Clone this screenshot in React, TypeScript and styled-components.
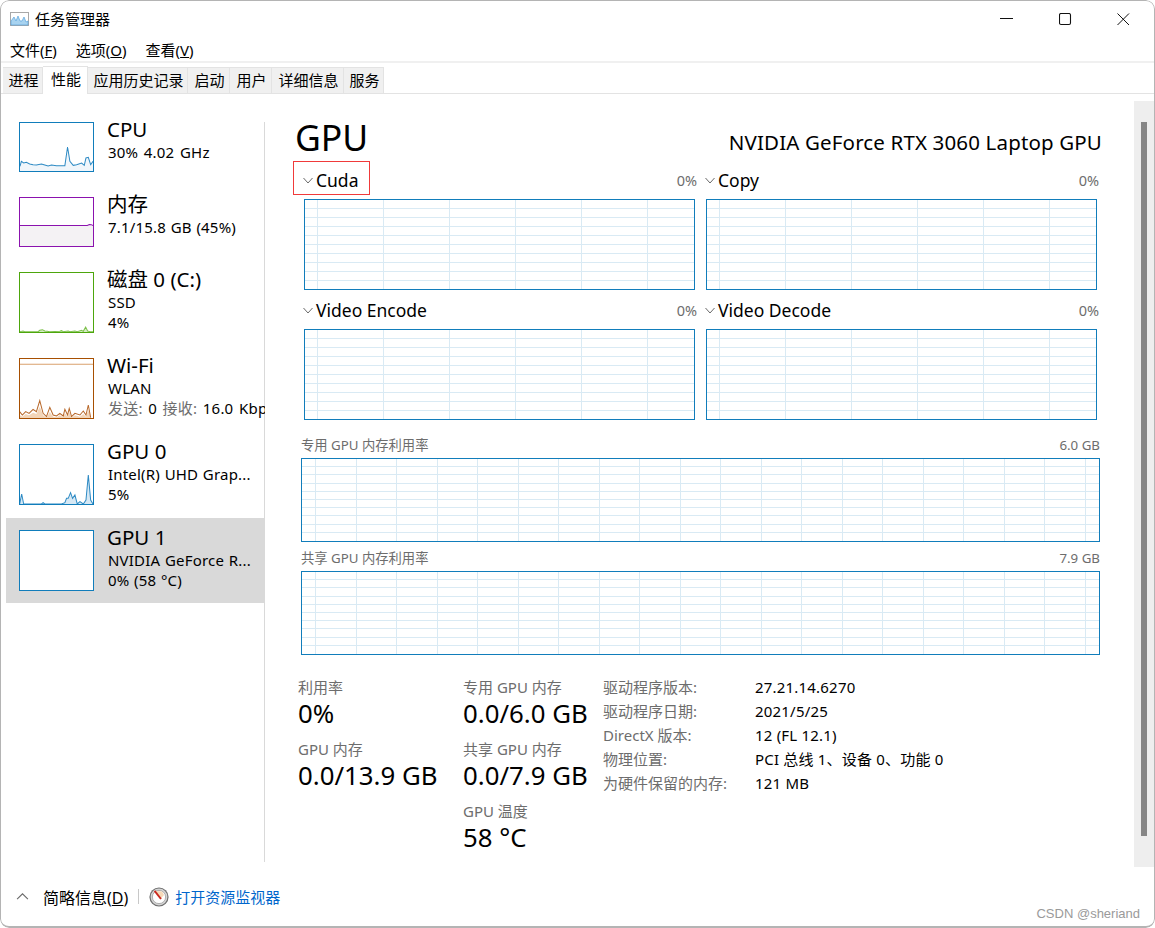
import React from "react";
import styled, { createGlobalStyle } from "styled-components";

const Global = createGlobalStyle`
  html, body { margin: 0; padding: 0; background: #fff; }
  * { box-sizing: border-box; }
  body { font-family: "Noto Sans", "Noto Sans CJK SC", sans-serif; color: #000; }
`;

const Window = styled.div`
  position: relative;
  width: 1155px;
  height: 928px;
  background: #fff;
  border-radius: 9px;
  overflow: hidden;
  display: flex;
  flex-direction: column;
  &::after {
    content: "";
    position: absolute;
    inset: 0;
    border: 1px solid #b4b4b4;
    border-bottom-width: 2px;
    border-radius: 9px;
    pointer-events: none;
  }
`;

const TitleBar = styled.div`
  height: 37px;
  flex: none;
  display: flex;
  align-items: center;
  padding-left: 10px;
  font-size: 15px;
`;
const TitleText = styled.span`
  margin-left: 6px;
  flex: 1;
`;
const WinControls = styled.div`
  display: flex;
  margin-right: 2px;
  height: 37px;
`;
const WinButton = styled.div`
  width: 58.5px;
  padding-top: 2px;
  display: flex;
  align-items: center;
  justify-content: center;
`;

const MenuBar = styled.div`
  height: 24px;
  flex: none;
  display: flex;
  align-items: center;
  padding: 1px 0 0 10px;
  gap: 19px;
  font-size: 15px;
  line-height: 24px;
  & u { text-underline-offset: 1px; }
`;
const Band = styled.div`
  height: 2px;
  flex: none;
  background: #f0f0f0;
`;
const TabRow = styled.div`
  height: 31px;
  flex: none;
  display: flex;
  align-items: flex-end;
  padding-left: 3px;
  border-bottom: 1px solid #e3e3e3;
`;
const Tab = styled.div<{ $w: number; $active?: boolean }>`
  width: ${(p) => p.$w}px;
  height: ${(p) => (p.$active ? 28 : 26)}px;
  margin-bottom: ${(p) => (p.$active ? -1 : 0)}px;
  padding-left: 2px;
  background: ${(p) => (p.$active ? "#fff" : "#f0f0f0")};
  border: 1px solid #e3e3e3;
  border-bottom: 0;
  border-left-width: 0;
  font-size: 15px;
  line-height: 25px;
  text-align: center;
  white-space: nowrap;
  position: relative;
`;

const Body = styled.div`
  flex: 1;
  min-height: 0;
  display: flex;
`;

const Sidebar = styled.div`
  position: relative;
  width: 265px;
  flex: none;
  padding: 16px 0 0 6px;
  &::after {
    content: "";
    position: absolute;
    top: 28px;
    right: 0;
    width: 1px;
    height: 740px;
    background: #d9d9d9;
  }
`;
const Item = styled.div<{ $selected?: boolean }>`
  position: relative;
  z-index: 1;
  display: flex;
  align-items: flex-start;
  padding: 12px 0 12px 13px;
  margin-bottom: 1px;
  background: ${(p) => (p.$selected ? "#d9d9d9" : "transparent")};
  overflow: hidden;
`;
const Thumb = styled.div<{ $color: string; $h: number }>`
  width: 75px;
  height: ${(p) => p.$h}px;
  flex: none;
  border: 1px solid ${(p) => p.$color};
  background: #fff;
  & svg { display: block; width: 73px; height: ${(p) => p.$h - 2}px; }
`;
const ItemText = styled.div`
  margin: -5px 0 0 13px;
  white-space: nowrap;
`;
const ItemTitle = styled.div`
  font-size: 20.5px;
  line-height: 24px;
  margin-bottom: 1px;
`;
const ItemSub = styled.div<{ $wide?: boolean }>`
  font-size: 15px;
  letter-spacing: 0.2px;
  word-spacing: ${(p) => (p.$wide ? 1.5 : 0.5)}px;
  line-height: 20px;
  margin-left: 1px;
`;
const Muted = styled.span`
  color: #6d6d6d;
`;

const Main = styled.div`
  flex: 1;
  min-width: 0;
  padding: 20px 32px 0 31px;
`;
const Header = styled.div`
  display: flex;
  justify-content: space-between;
  align-items: flex-end;
  height: 46px;
  margin-bottom: 3px;
`;
const Heading = styled.div`
  font-size: 35.5px;
  line-height: 46px;
  margin-left: -1px;
`;
const GpuName = styled.div`
  font-size: 20.5px;
  letter-spacing: 0.15px;
  line-height: 26px;
  margin-bottom: 5px;
`;
const EngineGrid = styled.div`
  display: grid;
  grid-template-columns: 396px 396px;
  column-gap: 6px;
  row-gap: 3px;
  margin-left: 6px;
`;
const Engine = styled.div`
  position: relative;
`;
const EngineHead = styled.div`
  height: 36px;
  padding-bottom: 2px;
  display: flex;
  align-items: center;
  & svg { flex: none; }
`;
const EngineName = styled.span`
  font-size: 17.5px;
  margin-left: 2px;
  flex: 1;
`;
const Percent = styled.span`
  font-size: 14.5px;
  color: #6d6d6d;
  margin-right: 1px;
`;
const RedMark = styled.div`
  position: absolute;
  left: -9px;
  top: -2px;
  width: 77px;
  height: 34px;
  border: 1px solid #f03a3a;
`;
const EngineChart = styled.div`
  width: 391px;
  height: 91px;
  margin-left: 2px;
  border: 1px solid #117dbb;
  & svg { display: block; }
`;
const WideBlock = styled.div<{ $top: number }>`
  margin: ${(p) => p.$top}px 2px 0 5px;
`;
const WideHead = styled.div`
  height: 20px;
  margin-bottom: 3px;
  padding-bottom: 1px;
  display: flex;
  justify-content: space-between;
  align-items: center;
  font-size: 13.3px;
  color: #6d6d6d;
`;
const WideChart = styled.div`
  height: 84px;
  border: 1px solid #117dbb;
  & svg { display: block; }
`;

const Stats = styled.div`
  display: flex;
  margin-top: 20px;
  padding-left: 2px;
`;
const StatCol = styled.div<{ $w: number }>`
  width: ${(p) => p.$w}px;
  flex: none;
  padding-top: 2px;
`;
const Stat = styled.div`
  margin-bottom: 10px;
`;
const StatLabel = styled.div`
  font-size: 15px;
  line-height: 20px;
  color: #6d6d6d;
`;
const StatValue = styled.div`
  font-size: 25.8px;
  line-height: 32px;
  white-space: nowrap;
`;
const InfoTable = styled.div`
  display: grid;
  grid-template-columns: 152px auto;
  grid-auto-rows: 24px;
  font-size: 15px;
  line-height: 24px;
`;
const InfoLabel = styled.div`
  color: #6d6d6d;
`;
const InfoValue = styled.div`
  color: #000;
  letter-spacing: 0.2px;
`;

const Track = styled.div`
  width: 20px;
  flex: none;
  margin: 7px 1px 0 0;
  padding: 21px 7px 31px;
  background: #eeeeee;
`;
const ScrollThumb = styled.div`
  width: 6px;
  height: 100%;
  background: #868686;
`;

const Footer = styled.div`
  height: 61px;
  flex: none;
  display: flex;
  align-items: center;
  padding: 0 0 2px 16px;
  font-size: 15px;
  & u { text-underline-offset: 1px; }
`;
const FooterLabel = styled.span`
  margin-left: 14px;
  font-size: 16px;
`;
const Separator = styled.div`
  width: 1px;
  height: 15px;
  background: #c8c8c8;
  margin: 0 10px;
`;
const MonitorLink = styled.a`
  margin-left: 6px;
  color: #0066cc;
`;
const Watermark = styled.div`
  position: absolute;
  right: 15px;
  bottom: 7px;
  font-family: "Liberation Sans", sans-serif;
  font-size: 13px;
  color: #9a9a9a;
`;

const Chevron = ({ up, size = 12 }: { up?: boolean; size?: number }) => (
  <svg width={size} height={size} viewBox="0 0 12 12" fill="none" stroke="#6a6a6a" strokeWidth="1">
    <path d={up ? "M1 8.5 L6 3.5 L11 8.5" : "M1.5 4 L6 9 L10.5 4"} />
  </svg>
);

const Grid = ({ w, h, vStart, vStep, hStep }: { w: number; h: number; vStart: number; vStep: number; hStep: number }) => {
  const xs: number[] = [];
  for (let x = vStart; x < w; x += vStep) xs.push(Math.round(x) + 0.5);
  const ys: number[] = [];
  for (let y = hStep; y < h; y += hStep) ys.push(Math.round(y) - 0.5);
  return (
    <svg width={w} height={h} shapeRendering="crispEdges">
      {ys.map((y) => (
        <line key={`h${y}`} x1={0} x2={w} y1={y} y2={y} stroke="#d9eaf4" />
      ))}
      {xs.map((x) => (
        <line key={`v${x}`} x1={x} x2={x} y1={0} y2={h} stroke="#d9eaf4" />
      ))}
    </svg>
  );
};

const Spark = ({ box, color, fill, pts, base }: { box: string; color: string; fill: string; pts: string; base: number }) => {
  const first = pts.trim().split(" ")[0].split(",")[0];
  const last = pts.trim().split(" ").slice(-1)[0].split(",")[0];
  return (
    <svg viewBox={box} preserveAspectRatio="none">
      <polygon points={`${first},${base} ${pts} ${last},${base}`} fill={fill} />
      <polyline points={pts} fill="none" stroke={color} strokeWidth="3" />
    </svg>
  );
};

const AppIcon = () => (
  <svg width="19" height="14" viewBox="0 0 19 14" style={{ flex: "none" }}>
    <rect x="0.5" y="0.5" width="18" height="13" fill="#fff" stroke="#a8a8a8" />
    <path d="M1 13 V9 L4 5 L6 9 L8 4 L10 9 L12 9 L14 5 L16 10 L18 9 V13 Z" fill="#a8d3f0" stroke="#5aa5dc" strokeWidth="0.7" />
  </svg>
);

const MonitorIcon = () => (
  <svg width="20" height="20" viewBox="0 0 20 20" style={{ flex: "none" }}>
    <circle cx="10" cy="10" r="9.6" fill="#6f6f6f" />
    <circle cx="10" cy="10" r="8.4" fill="#d4d4d4" />
    <circle cx="10" cy="10" r="6.6" fill="#fff" stroke="#8a8a8a" strokeWidth="0.6" />
    <path d="M7 4 L13 4.6 L15 8 L11.5 12 Z" fill="#f6d9b8" />
    <path d="M5.6 3.8 L12 12" stroke="#c9281f" strokeWidth="1.9" />
  </svg>
);

const engines = [
  { name: "Cuda", mark: true },
  { name: "Copy" },
  { name: "Video Encode" },
  { name: "Video Decode" },
];

export default function App() {
  return (
    <Window>
      <Global />
      <TitleBar>
        <AppIcon />
        <TitleText>任务管理器</TitleText>
        <WinControls>
          <WinButton>
            <svg width="13" height="13" viewBox="0 0 13 13"><path d="M0 5.5 H13" stroke="#111" strokeWidth="1" /></svg>
          </WinButton>
          <WinButton>
            <svg width="13" height="13" viewBox="0 0 13 13"><rect x="0.5" y="0.5" width="11" height="11" rx="1.5" fill="none" stroke="#111" strokeWidth="1.1" /></svg>
          </WinButton>
          <WinButton>
            <svg width="13" height="13" viewBox="0 0 13 13"><path d="M0.5 0.5 L12 12 M12 0.5 L0.5 12" stroke="#111" strokeWidth="1" /></svg>
          </WinButton>
        </WinControls>
      </TitleBar>
      <MenuBar>
        <span>文件(<u>F</u>)</span>
        <span>选项(<u>O</u>)</span>
        <span>查看(<u>V</u>)</span>
      </MenuBar>
      <Band />
      <TabRow>
        <Tab $w={40}>进程</Tab>
        <Tab $w={45} $active>性能</Tab>
        <Tab $w={100}>应用历史记录</Tab>
        <Tab $w={42}>启动</Tab>
        <Tab $w={42}>用户</Tab>
        <Tab $w={72}>详细信息</Tab>
        <Tab $w={40}>服务</Tab>
      </TabRow>
      <Body>
        <Sidebar>
          <Item>
            <Thumb $color="#117dbb" $h={50}>
              <Spark box="61 40 218 144" color="#2d8ac4" fill="#f0f6fb" base={184}
                pts="61,170 65,155 72,160 80,158 90,163 100,165 110,166 125,163 135,166 145,169 155,166 170,168 185,168 195,168 203,112 210,155 220,167 230,165 245,160 253,167 258,145 265,143 272,165 279,155" />
            </Thumb>
            <ItemText>
              <ItemTitle>CPU</ItemTitle>
              <ItemSub $wide>30% 4.02 GHz</ItemSub>
            </ItemText>
          </Item>
          <Item>
            <Thumb $color="#8b12ae" $h={50}>
              <Spark box="61 264 218 144" color="#8b12ae" fill="#f4f2f4" base={408}
                pts="61,346.5 262,346.5 268,343.5 274,344 279,346.5" />
            </Thumb>
            <ItemText>
              <ItemTitle>内存</ItemTitle>
              <ItemSub>7.1/15.8 GB (45%)</ItemSub>
            </ItemText>
          </Item>
          <Item>
            <Thumb $color="#4da60c" $h={61}>
              <Spark box="61 490 218 177" color="#7dc04c" fill="#d6ecc6" base={667}
                pts="61,666 70,664 75,666 115,666 120,662 128,660 135,664 142,665 150,666 180,665 185,663 190,666 205,664 210,666 225,664 232,666 245,662 250,665 257,652 263,664 270,666 279,666" />
            </Thumb>
            <ItemText>
              <ItemTitle>磁盘 0 (C:)</ItemTitle>
              <ItemSub>SSD</ItemSub>
              <ItemSub>4%</ItemSub>
            </ItemText>
          </Item>
          <Item>
            <Thumb $color="#a74f01" $h={61}>
              <svg viewBox="61 27 218 177" preserveAspectRatio="none">
                <path d="M61 43 H279" stroke="#d9a06c" strokeWidth="3" fill="none" />
                <polygon points="61,204 60,195 68,200 78,192 88,196 100,188 110,192 120,170 130,196 140,203 150,186 160,200 170,202 180,196 190,202 195,190 203,200 208,186 215,203 225,196 240,200 250,192 258,200 265,180 272,204" fill="#f3d5b8" />
                <polyline points="60,185 68,195 78,185 88,190 100,178 110,185 120,152 130,190 140,200 150,172 160,195 170,198 180,190 190,198 195,178 203,195 208,175 215,200 225,190 240,195 250,183 258,195 265,165 272,203" fill="none" stroke="#b8682a" strokeWidth="3" />
              </svg>
            </Thumb>
            <ItemText>
              <ItemTitle>Wi-Fi</ItemTitle>
              <ItemSub>WLAN</ItemSub>
              <ItemSub $wide><Muted>发送:</Muted> 0 <Muted>接收:</Muted> 16.0 Kbps</ItemSub>
            </ItemText>
          </Item>
          <Item>
            <Thumb $color="#117dbb" $h={61}>
              <Spark box="61 285 218 177" color="#2d8ac4" fill="#d6e8f4" base={462}
                pts="60,462 66,432 72,462 125,462 130,458 135,462 185,462 195,458 200,445 205,445 212,428 218,445 225,435 232,462 240,455 250,462 258,450 265,375 272,450 279,462" />
            </Thumb>
            <ItemText>
              <ItemTitle>GPU 0</ItemTitle>
              <ItemSub>Intel(R) UHD Grap...</ItemSub>
              <ItemSub>5%</ItemSub>
            </ItemText>
          </Item>
          <Item $selected>
            <Thumb $color="#117dbb" $h={61} />
            <ItemText>
              <ItemTitle>GPU 1</ItemTitle>
              <ItemSub>NVIDIA GeForce R...</ItemSub>
              <ItemSub>0% (58 °C)</ItemSub>
            </ItemText>
          </Item>
        </Sidebar>
        <Main>
          <Header>
            <Heading>GPU</Heading>
            <GpuName>NVIDIA GeForce RTX 3060 Laptop GPU</GpuName>
          </Header>
          <EngineGrid>
            {engines.map((e) => (
              <Engine key={e.name}>
                <EngineHead>
                  <Chevron />
                  <EngineName>{e.name}</EngineName>
                  <Percent>0%</Percent>
                </EngineHead>
                <EngineChart>
                  <Grid w={389} h={89} vStart={12} vStep={66} hStep={9} />
                </EngineChart>
                {e.mark && <RedMark />}
              </Engine>
            ))}
          </EngineGrid>
          <WideBlock $top={15}>
            <WideHead><span>专用 GPU 内存利用率</span><span>6.0 GB</span></WideHead>
            <WideChart><Grid w={797} h={82} vStart={13} vStep={40.5} hStep={8.2} /></WideChart>
          </WideBlock>
          <WideBlock $top={6}>
            <WideHead><span>共享 GPU 内存利用率</span><span>7.9 GB</span></WideHead>
            <WideChart><Grid w={797} h={82} vStart={13} vStep={40.5} hStep={8.2} /></WideChart>
          </WideBlock>
          <Stats>
            <StatCol $w={165}>
              <Stat><StatLabel>利用率</StatLabel><StatValue>0%</StatValue></Stat>
              <Stat><StatLabel>GPU 内存</StatLabel><StatValue>0.0/13.9 GB</StatValue></Stat>
            </StatCol>
            <StatCol $w={140}>
              <Stat><StatLabel>专用 GPU 内存</StatLabel><StatValue>0.0/6.0 GB</StatValue></Stat>
              <Stat><StatLabel>共享 GPU 内存</StatLabel><StatValue>0.0/7.9 GB</StatValue></Stat>
              <Stat><StatLabel>GPU 温度</StatLabel><StatValue>58 °C</StatValue></Stat>
            </StatCol>
            <InfoTable>
              <InfoLabel>驱动程序版本:</InfoLabel><InfoValue>27.21.14.6270</InfoValue>
              <InfoLabel>驱动程序日期:</InfoLabel><InfoValue>2021/5/25</InfoValue>
              <InfoLabel>DirectX 版本:</InfoLabel><InfoValue>12 (FL 12.1)</InfoValue>
              <InfoLabel>物理位置:</InfoLabel><InfoValue>PCI 总线 1、设备 0、功能 0</InfoValue>
              <InfoLabel>为硬件保留的内存:</InfoLabel><InfoValue>121 MB</InfoValue>
            </InfoTable>
          </Stats>
        </Main>
        <Track><ScrollThumb /></Track>
      </Body>
      <Footer>
        <Chevron up size={13} />
        <FooterLabel>简略信息(<u>D</u>)</FooterLabel>
        <Separator />
        <MonitorIcon />
        <MonitorLink>打开资源监视器</MonitorLink>
      </Footer>
      <Watermark>CSDN @sheriand</Watermark>
    </Window>
  );
}
